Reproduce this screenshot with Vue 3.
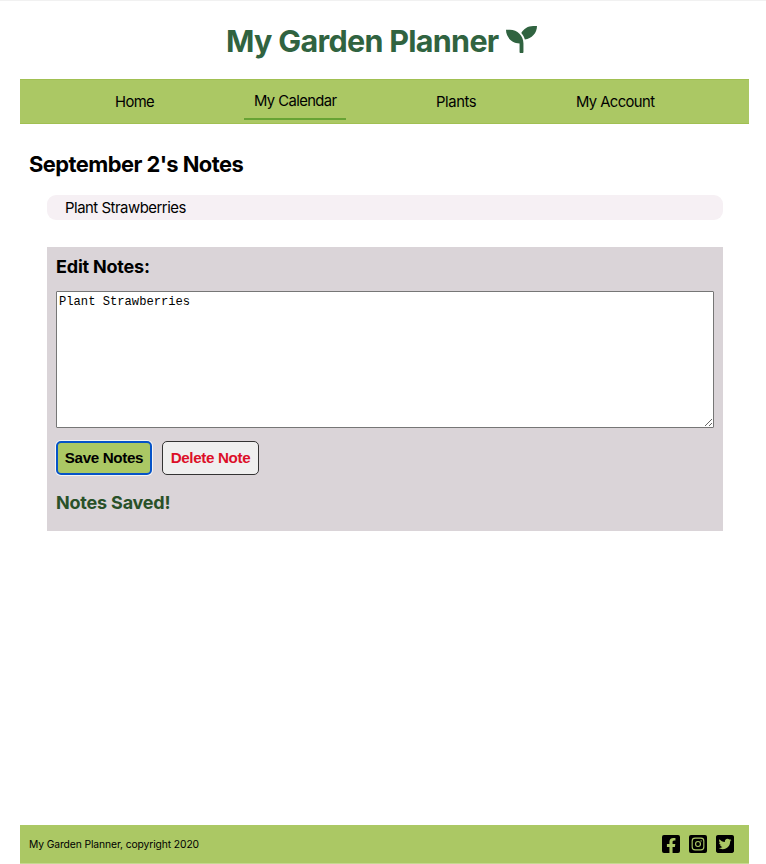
<script setup>
import { ref } from 'vue'

const links = [
  { label: 'Home', cls: 'home' },
  { label: 'My Calendar', cls: 'calendar', active: true },
  { label: 'Plants', cls: 'plants' },
  { label: 'My Account', cls: 'account' },
]
const draft = ref('Plant Strawberries')
const saved = ref('Plant Strawberries')
</script>

<template>
  <div class="page">
    <header class="header">
      <h1>My Garden Planner</h1>
      <svg class="seedling" viewBox="0 0 512 512"><path d="M64 96H0c0 123.7 100.3 224 224 224v144c0 8.8 7.2 16 16 16h32c8.8 0 16-7.2 16-16V320C288 196.3 187.7 96 64 96zm384-64c-84.2 0-157.4 46.5-195.7 115.2 27.7 30.2 48.2 66.9 59 107.6C424 243.1 512 147.9 512 32h-64z" /></svg>
    </header>
    <nav class="nav">
      <a v-for="l in links" :key="l.label" :class="[l.cls, { active: l.active }]">{{ l.label }}</a>
    </nav>
    <main class="main">
      <h2>September 2's Notes</h2>
      <div class="note"><span>{{ saved }}</span></div>
      <section class="editor">
        <h3 class="edit-title">Edit Notes:</h3>
        <textarea v-model="draft" spellcheck="false"></textarea>
        <div class="buttons">
          <button class="save">Save Notes</button>
          <button class="delete">Delete Note</button>
        </div>
        <h3 class="status">Notes Saved!</h3>
      </section>
    </main>
    <footer class="footer">
      <span class="copy">My Garden Planner, copyright 2020</span>
      <div class="social">
        <svg viewBox="0 32 448 448"><path d="M400 32H48A48 48 0 0 0 0 80v352a48 48 0 0 0 48 48h137.25V327.69h-63V256h63v-54.64c0-62.15 37-96.48 93.67-96.48 27.14 0 55.52 4.84 55.52 4.84v61h-31.27c-30.81 0-40.42 19.12-40.42 38.73V256h68.78l-11 71.69h-57.78V480H400a48 48 0 0 0 48-48V80a48 48 0 0 0-48-48z" /></svg>
        <svg viewBox="0 0 448 448">
          <rect width="448" height="448" rx="48" />
          <rect class="line" x="79" y="79" width="290" height="290" rx="72" />
          <circle class="line" cx="224" cy="224" r="61" />
          <circle class="dot" cx="301" cy="147" r="17" />
        </svg>
        <svg viewBox="0 32 448 448"><path d="M400 32H48C21.5 32 0 53.5 0 80v352c0 26.5 21.5 48 48 48h352c26.5 0 48-21.5 48-48V80c0-26.5-21.5-48-48-48zm-48.9 158.8c.2 2.8.2 5.7.2 8.5 0 86.7-66 186.6-186.6 186.6-37.2 0-71.7-10.8-100.7-29.4 5.3.6 10.4.8 15.8.8 30.7 0 58.9-10.4 81.4-28-28.8-.6-53-19.5-61.3-45.5 10.1 1.5 19.2 1.5 29.6-1.2-30-6.1-52.5-32.5-52.5-64.4v-.8c8.7 4.9 18.9 7.9 29.6 8.3a65.447 65.447 0 0 1-29.2-54.6c0-12.2 3.2-23.4 8.9-33.1 32.3 39.8 80.8 65.8 135.2 68.6-9.3-44.5 24-80.6 64-80.6 18.9 0 35.9 7.9 47.9 20.7 14.8-2.8 29-8.3 41.6-15.8-4.9 15.2-15.2 28-28.8 36.1 13.2-1.4 26-5.1 37.8-10.2-8.9 13.1-20.1 24.7-32.9 34z" /></svg>
      </div>
    </footer>
  </div>
</template>

<style>
body {
  margin: 0;
  background: #fff;
}
</style>

<style scoped>
* {
  box-sizing: border-box;
}
.page {
  height: 864px;
  padding: 0 17px 0 20px;
  border-top: 1px solid #f1f1f1;
  display: flex;
  flex-direction: column;
  font-family: Inter, "Liberation Sans", sans-serif;
  color: #000;
  overflow: hidden;
}
h1, h2, h3 {
  margin: 0;
  font-weight: 700;
  white-space: nowrap;
}
.header {
  height: 78px;
  padding: 20px 0 0 206px;
  display: flex;
  align-items: flex-start;
  color: #306340;
}
h1 {
  width: 280px;
  font-size: 30.5px;
  line-height: 40px;
  letter-spacing: -0.7px;
}
.seedling {
  width: 31px;
  height: 31px;
  margin-top: 3px;
  fill: currentColor;
}
.nav {
  height: 45px;
  flex: none;
  display: flex;
  align-items: center;
  padding-left: 95px;
  background: #abc864;
  border: solid #a1c052;
  border-width: 1px 0;
  font-size: 14.8px;
  letter-spacing: -0.58px;
  white-space: nowrap;
}
.home { width: 129px; }
.calendar { width: 102px; margin-right: 90px; }
.plants { width: 140px; letter-spacing: -0.4px; }
.active {
  height: 36px;
  margin-top: 1px;
  padding-left: 10px;
  line-height: 34px;
  border-bottom: 2px solid #67a334;
}
.main {
  flex: 1;
  padding: 25px 26px 0 27px;
}
h2 {
  margin-left: -18px;
  font-size: 21.9px;
  line-height: 30px;
  letter-spacing: -0.55px;
}
.note {
  height: 25px;
  margin-top: 16px;
  padding-left: 18px;
  border-radius: 9px;
  background: #f6f0f4;
  font-size: 14.9px;
  line-height: 26px;
  letter-spacing: -0.48px;
}
.editor {
  height: 284px;
  margin-top: 27px;
  padding: 9px 9px 0;
  background: #dad4d8;
}
.edit-title, .status {
  font-size: 18px;
  line-height: 22px;
  letter-spacing: -0.2px;
}
textarea {
  display: block;
  width: 658px;
  height: 137px;
  margin-top: 13px;
  padding: 3px 2px 2px;
  border: 1px solid #767676;
  border-radius: 1px;
  background: #fff;
  color: #000;
  font: 12.15px/15px "Liberation Mono", monospace;
  resize: both;
  outline: none;
}
.buttons {
  display: flex;
  gap: 10px;
  margin-top: 13px;
}
button {
  height: 34px;
  padding: 0 0 2px;
  border-radius: 5px;
  font: bold 15.2px "Liberation Sans", Arial, sans-serif;
  letter-spacing: -0.35px;
}
.save {
  width: 96px;
  border: 2px solid #0653c8;
  background: #abc864;
  color: #000;
  box-shadow: 0 0 0 1px #f5f5f5;
}
.delete {
  width: 97px;
  border: 1px solid #333;
  background: #efefef;
  color: #dc1028;
}
.status {
  margin-top: 17px;
  color: #295129;
}
.footer {
  height: 39px;
  flex: none;
  display: flex;
  justify-content: space-between;
  align-items: center;
  padding: 0 15px 0 9px;
  background: #abc864;
  border-bottom: 1px solid #c4d990;
}
.copy {
  font-size: 10.3px;
  letter-spacing: -0.1px;
}
.social {
  display: flex;
  gap: 9px;
}
.social svg {
  width: 18px;
  height: 18px;
}
.line {
  fill: none;
  stroke: #abc864;
  stroke-width: 28;
}
.dot {
  fill: #abc864;
}
</style>
